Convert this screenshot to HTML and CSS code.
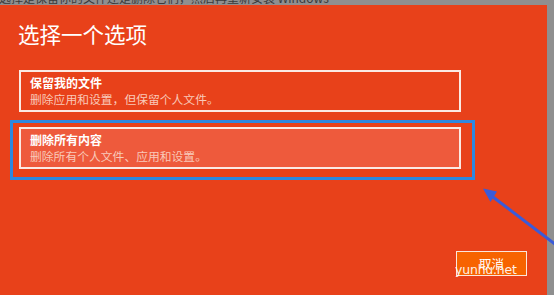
FILE: index.html
```html
<!DOCTYPE html>
<html lang="zh-CN">
<head>
<meta charset="utf-8">
<title>选择一个选项</title>
<link rel="stylesheet" href="styles.css">
</head>
<body>
<div class="page">
  <div class="topstrip"><span class="toptext">可以选择是保留你的文件还是删除它们，然后再重新安装 Windows</span></div>
  <div class="main">
    <section class="panel">
      <h1 class="title">选择一个选项</h1>
      <div class="options">
        <div class="option">
          <div class="opt-title">保留我的文件</div>
          <div class="opt-desc">删除应用和设置，但保留个人文件。</div>
        </div>
        <div class="option option-active">
          <div class="opt-title">删除所有内容</div>
          <div class="opt-desc">删除所有个人文件、应用和设置。</div>
          <div class="highlight"></div>
        </div>
      </div>
      <div class="footer">
        <button class="cancel">取消</button>
      </div>
    </section>
    <div class="edge"></div>
  </div>
  <svg class="arrow" width="554" height="295" viewBox="0 0 554 295">
    <line x1="556" y1="245" x2="489" y2="194" stroke="#3a5bd9" stroke-width="3"/>
    <polygon points="483,188.5 497,191.5 490.5,202" fill="#3a5bd9"/>
  </svg>
  <div class="watermark">yunhu.net</div>
</div>
</body>
</html>
```

FILE: styles.css
```css
html, body {
  margin: 0;
  padding: 0;
}
body {
  background: #8f8f8f;
  font-family: "Noto Sans CJK SC", "Noto Sans", sans-serif;
  overflow: hidden;
}
.page {
  position: relative;
  width: 554px;
  height: 295px;
  overflow: hidden;
}
.topstrip {
  height: 5px;
  overflow: hidden;
  background: #8f8f8f;
}
.toptext {
  display: block;
  margin-top: -9px;
  margin-left: -25px;
  font-size: 12px;
  line-height: 14px;
  color: #3a3a3a;
  white-space: nowrap;
}
.main {
  display: flex;
  height: 290px;
}
.panel {
  width: 547px;
  background: #e8411a;
  padding: 15px 20px 19px 18px;
  box-sizing: border-box;
  display: flex;
  flex-direction: column;
}
.edge {
  flex: 1;
  background: #8f8f8f;
}
.title {
  margin: 0;
  font-size: 21.5px;
  line-height: 28px;
  font-weight: 400;
  color: #fff;
}
.options {
  margin-top: 22px;
  margin-left: 1px;
  width: 442px;
  display: flex;
  flex-direction: column;
  gap: 15px;
}
.option {
  position: relative;
  height: 42px;
  box-sizing: border-box;
  border: 2px solid #fbe9e3;
  padding: 3px 9px;
}
.option-active {
  background: #ee5a3c;
}
.opt-title {
  font-size: 12px;
  line-height: 16px;
  font-weight: 700;
  color: #fff;
}
.opt-desc {
  font-size: 11.8px;
  line-height: 16px;
  color: #f9c9b9;
}
.highlight {
  position: absolute;
  left: -11px;
  top: -9px;
  width: 465px;
  height: 60px;
  box-sizing: border-box;
  border: 3px solid #2d88e0;
}
.footer {
  margin-top: auto;
  display: flex;
  justify-content: flex-end;
}
.cancel {
  width: 71px;
  height: 25px;
  margin: 0;
  padding: 0;
  background: #f76300;
  border: 1.5px solid #fbe6dc;
  color: #fff;
  font-family: "Noto Sans CJK SC", sans-serif;
  font-size: 12.5px;
  line-height: 20px;
}
.arrow {
  position: absolute;
  left: 0;
  top: 0;
}
.watermark {
  position: absolute;
  left: 455px;
  top: 263px;
  font-family: "DejaVu Sans", sans-serif;
  font-size: 12.5px;
  line-height: 14px;
  color: #fff;
  opacity: 0.9;
  letter-spacing: -0.2px;
}
```
